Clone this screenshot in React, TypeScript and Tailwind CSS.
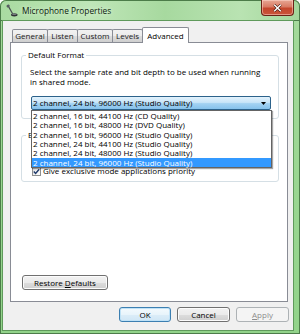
import React from "react";

const font = { fontFamily: '"Open Sans", "Noto Sans", sans-serif' };

function Tab({ label, selected, w }: { label: string; selected?: boolean; w: string }) {
  if (selected) {
    return (
      <div
        className={`-ml-px ${w} h-[16px] mb-[-1px] relative z-10 bg-white border border-b-0 border-[#898c95] rounded-t-[2px] flex items-center justify-center text-[8px] leading-[10px] text-black`}
      >
        {label}
      </div>
    );
  }
  return (
    <div
      className={`first:ml-0 -ml-px ${w} h-[13px] mt-[2px] bg-[linear-gradient(180deg,#f2f2f2_0%,#ebebeb_50%,#dddddd_51%,#cfcfcf_100%)] border border-b-0 border-[#898c95] rounded-t-[2px] flex items-center justify-center text-[8px] leading-[10px] text-[#1a1a1a]`}
    >
      {label}
    </div>
  );
}

function CheckBox() {
  return (
    <div className="w-[9px] h-[9px] border border-[#8e8f8f] bg-[linear-gradient(135deg,#dcdcdc_0%,#ffffff_100%)] flex items-center justify-center shrink-0">
      <svg width="7" height="7" viewBox="0 0 7 7">
        <path d="M0.8 3.6 L2.6 5.4 L6.2 1.2" fill="none" stroke="#1f3a6b" strokeWidth="1.4" />
      </svg>
    </div>
  );
}

function WinButton({
  children,
  w,
  kind = "normal",
}: {
  children: React.ReactNode;
  w: string;
  kind?: "normal" | "default" | "disabled";
}) {
  const cls =
    kind === "default"
      ? "border-[#3c7fb1] bg-[linear-gradient(180deg,#f4fafd_0%,#e8f4fb_50%,#dcedf8_51%,#cfe6f5_100%)] text-black shadow-[inset_0_0_0_1px_#bfe2f7]"
      : kind === "disabled"
      ? "border-[#adb2b5] bg-[#f4f4f4] text-[#8d8d8d]"
      : "border-[#707070] bg-[linear-gradient(180deg,#f2f2f2_0%,#ebebeb_50%,#dddddd_51%,#cfcfcf_100%)] text-black shadow-[inset_0_0_0_1px_#fcfcfc]";
  return (
    <div
      className={`${w} h-[15px] border rounded-[3px] flex items-center justify-center text-[8px] leading-[10px] ${cls}`}
    >
      {children}
    </div>
  );
}

export default function App() {
  const items = [
    "2 channel, 16 bit, 44100 Hz (CD Quality)",
    "2 channel, 16 bit, 48000 Hz (DVD Quality)",
    "2 channel, 16 bit, 96000 Hz (Studio Quality)",
    "2 channel, 24 bit, 44100 Hz (Studio Quality)",
    "2 channel, 24 bit, 48000 Hz (Studio Quality)",
    "2 channel, 24 bit, 96000 Hz (Studio Quality)",
  ];
  return (
    <div
      className="w-[300px] h-[334px] flex flex-col overflow-hidden rounded-t-[6px] bg-[linear-gradient(180deg,#b7e1af_0%,#a3d99a_8%,#92d38a_100%)] shadow-[inset_0_0_0_1px_#4c7c49]"
      style={font}
    >
      {/* Title bar */}
      <div className="h-[21px] flex shrink-0 bg-[linear-gradient(90deg,#a9dba1_0%,#bfe6b8_30%,#a7d99f_55%,#b9e3b2_80%,#a3d79b_100%)] rounded-t-[6px] shadow-[inset_0_0_0_1px_#4c7c49]">
        <div className="ml-[6px] mt-[4px] w-[12px] h-[13px]">
          <svg width="12" height="13" viewBox="0 0 12 13">
            <rect x="0.5" y="0.8" width="3.2" height="2.4" rx="1" fill="#5a5f63" transform="rotate(-30 2 2)" />
            <path d="M2.6 2.6 L6.6 9.8" stroke="#4a4f53" strokeWidth="1.2" fill="none" />
            <ellipse cx="8.3" cy="10.8" rx="3.3" ry="1.6" fill="#2f3336" />
            <ellipse cx="8.3" cy="10.3" rx="2.4" ry="0.8" fill="#7c8286" />
          </svg>
        </div>
        <div className="ml-[4px] mt-[5px] text-[8.3px] leading-[11px] text-[#0b1a0b] [text-shadow:0_0_4px_#e8f8e4]">
          Microphone Properties
        </div>
        <div className="ml-auto mr-[6px] w-[33px] h-[16px] rounded-b-[4px] border border-t-0 border-[#6b2216] bg-[linear-gradient(180deg,#e7a794_0%,#d97b64_45%,#c4462c_55%,#c9563b_100%)] shadow-[inset_0_0_0_1px_rgba(255,220,210,0.5)] flex items-center justify-center">
          <svg width="9" height="8" viewBox="0 0 9 8">
            <path d="M1.2 0.8 L7.8 7.2 M7.8 0.8 L1.2 7.2" stroke="#3b1109" strokeWidth="2.6" />
            <path d="M1.2 0.8 L7.8 7.2 M7.8 0.8 L1.2 7.2" stroke="#ffffff" strokeWidth="1.5" />
          </svg>
        </div>
      </div>

      {/* Client area */}
      <div className="ml-[3px] mr-[7px] h-[309px] bg-[#f0f0f0] shadow-[0_0_0_1px_#5f9a5b] flex flex-col">
        {/* Tabs */}
        <div className="flex pt-[6px] pl-[9px] h-[21px] items-start">
          <Tab label="General" w="w-[36px]" />
          <Tab label="Listen" w="w-[31px]" />
          <Tab label="Custom" w="w-[36px]" />
          <Tab label="Levels" w="w-[31px]" />
          <Tab label="Advanced" w="w-[47px]" selected />
        </div>

        {/* Panel */}
        <div className="ml-[7px] w-[278px] h-[260px] bg-white border border-[#898c95] flex flex-col">
          {/* Group 1 */}
          <div className="relative z-20 mt-[12px] ml-[10px] w-[258px] h-[64px] border border-[#d5dfe5] rounded-[3px] pl-[8px] pt-[11px]">
            <div className="absolute -top-[6px] left-[4px] px-[2px] bg-white text-[8px] leading-[10px] text-black">
              Default Format
            </div>
            <div className="text-[8px] leading-[10px] text-black whitespace-nowrap">
              Select the sample rate and bit depth to be used when running
            </div>
            <div className="text-[8px] leading-[10px] text-black">in shared mode.</div>
            <div className="relative mt-[9px] ml-[1px] w-[240px] h-[14px] border border-[#2c628b] rounded-[2px] bg-[linear-gradient(180deg,#e3f2fc_0%,#c8e5f8_45%,#a3d2f2_55%,#86c2ec_100%)] flex items-center pl-[1px]">
              <span className="text-[8px] leading-[10px] text-black">
                2 channel, 24 bit, 96000 Hz (Studio Quality)
              </span>
              <svg className="ml-auto mr-[4px]" width="5" height="3" viewBox="0 0 5 3">
                <path d="M0 0 H5 L2.5 3 Z" fill="#000" />
              </svg>
              {/* Drop list */}
              <div className="absolute left-[-1px] top-[13px] w-[241px] border border-[#646464] bg-white shadow-[1px_1px_1px_rgba(0,0,0,0.35)] flex flex-col">
                {items.map((t, i) => (
                  <div
                    key={i}
                    className={`h-[9.33px] pl-[1px] text-[8px] leading-[9.33px] whitespace-nowrap ${
                      i === items.length - 1 ? "bg-[#3399ff] text-white" : "text-black"
                    }`}
                  >
                    {t}
                  </div>
                ))}
              </div>
            </div>
          </div>

          {/* Group 2 */}
          <div className="relative mt-[16px] ml-[10px] w-[258px] h-[47px] border border-[#d5dfe5] rounded-[3px] pl-[10px] pt-[11px] flex flex-col gap-[9px]">
            <div className="absolute -top-[6px] left-[4px] px-[2px] bg-white text-[8px] leading-[10px] text-black">
              Exclusive Mode
            </div>
            <div className="flex items-center gap-[2px] h-[10px]">
              <CheckBox />
              <span className="text-[8px] leading-[10px] text-black whitespace-nowrap">
                Allow applications to take exclusive control of this device
              </span>
            </div>
            <div className="flex items-center gap-[2px] h-[10px]">
              <CheckBox />
              <span className="text-[8px] leading-[10px] text-black whitespace-nowrap">
                Give exclusive mode applications priority
              </span>
            </div>
          </div>

          <div className="mt-auto mb-[11px] ml-[11px]">
            <WinButton w="w-[86px]">
              <span>
                Restore <span className="underline">D</span>efaults
              </span>
            </WinButton>
          </div>
        </div>

        {/* Bottom buttons */}
        <div className="mt-[5px] flex justify-end gap-[6px] pr-[4px]">
          <WinButton w="w-[52px]" kind="default">
            OK
          </WinButton>
          <WinButton w="w-[53px]">Cancel</WinButton>
          <WinButton w="w-[53px]" kind="disabled">
            <span>
              <span className="underline">A</span>pply
            </span>
          </WinButton>
        </div>
      </div>
    </div>
  );
}
